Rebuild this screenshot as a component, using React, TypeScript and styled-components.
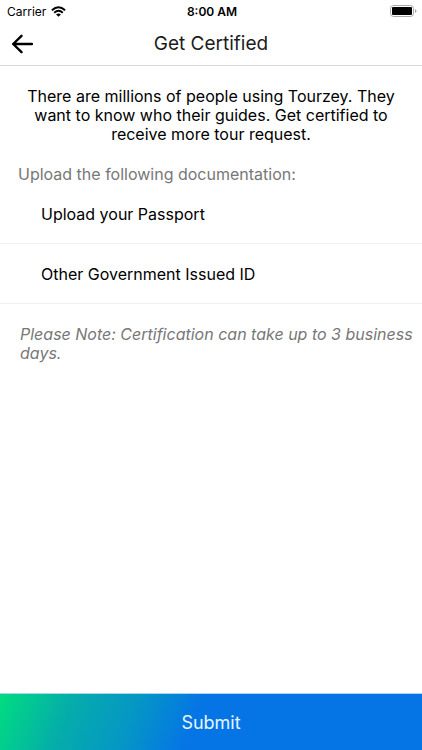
import React from 'react';
import styled, { createGlobalStyle } from 'styled-components';

const GlobalStyle = createGlobalStyle`
  * { box-sizing: border-box; }
  body { margin: 0; background: #fff; color: #000; font-family: Inter, "Liberation Sans", sans-serif; }
`;
const Screen = styled.div`
  display: flex;
  flex-direction: column;
  min-height: 100vh;
`;
const StatusBar = styled.div`
  display: grid;
  grid-template-columns: 1fr auto 1fr;
  align-items: center;
  height: 22px;
  padding: 0 5px 0 7px;
  font-size: 12px;
`;
const Carrier = styled.span`
  display: flex;
  align-items: center;
  gap: 5px;
`;
const Clock = styled.time`
  font-weight: 600;
`;
const Battery = styled.svg`
  justify-self: end;
`;
const Header = styled.header`
  display: grid;
  grid-template-columns: 44px 1fr 44px;
  align-items: center;
  height: 44px;
  border-bottom: 1px solid #dadada;
`;
const BackButton = styled.button`
  display: flex;
  align-items: center;
  height: 42px;
  padding: 0 0 0 11px;
  border: 0;
  background: none;
  color: #000;
`;
const Title = styled.h1`
  margin: 0;
  color: #1c1c1c;
  font-size: 19px;
  font-weight: 400;
  line-height: 42px;
  text-align: center;
`;
const Main = styled.main`
  flex: 1;
  padding-top: 21px;
`;
const Intro = styled.p`
  margin: 0;
  padding: 0 20px;
  font-size: 16px;
  line-height: 19px;
  text-align: center;
`;
const SectionTitle = styled.h2`
  margin: 0;
  padding: 20px 18px 0;
  color: #777;
  font-size: 16px;
  font-weight: 400;
  line-height: 20px;
`;
const Documents = styled.ul`
  margin: 0;
  padding: 0;
  list-style: none;
`;
const Row = styled.li`
  border-bottom: 1px solid #f0f0f0;
`;
const RowButton = styled.button`
  width: 100%;
  height: 59px;
  padding: 0 41px;
  border: 0;
  background: none;
  color: #000;
  font: inherit;
  font-size: 16px;
  text-align: left;
`;
const Note = styled.p`
  margin: 0;
  padding: 21px 8px 20px 20px;
  color: #777;
  font-size: 16px;
  font-style: italic;
  line-height: 19px;
`;
const Submit = styled.button`
  height: 57px;
  border: 0;
  border-top: 1px solid #a9d4f4;
  background: linear-gradient(111deg, #00dc80 0%, #05acab 17%, #0596c6 32%, #0575e6 46%);
  background-clip: padding-box;
  color: #e8f6ff;
  font: inherit;
  font-size: 18px;
`;

export default function App() {
  return (
    <Screen>
      <GlobalStyle />
      <StatusBar>
        <Carrier>
          Carrier
          <svg width="15" height="11" viewBox="0 0 15 11" fill="none" stroke="#000" strokeWidth="1.9" aria-hidden="true">
            <path d="M.9 4.2Q7.5-1.8 14.1 4.2M3.2 6.7Q7.5 3 11.8 6.7" />
            <path d="M5.1 8.4Q7.5 6.4 9.9 8.4L7.5 10.8Z" fill="#000" stroke="none" />
          </svg>
        </Carrier>
        <Clock>8:00 AM</Clock>
        <Battery width="27" height="12" viewBox="0 0 27 12" aria-hidden="true">
          <rect x="0.5" y="0.5" width="23" height="11" rx="3" fill="none" stroke="#a8a8a8" />
          <rect x="2" y="2" width="20" height="8" rx="1" />
          <path d="M25 4Q26.5 4.5 26.5 6T25 8Z" fill="#a8a8a8" />
        </Battery>
      </StatusBar>
      <Header>
        <BackButton aria-label="Back">
          <svg width="22" height="20" viewBox="0 0 22 20" fill="none" stroke="currentColor" strokeWidth="2.4" strokeLinecap="round" strokeLinejoin="round">
            <path d="M10.5 1.8L2.2 10L10.5 18.2M2.2 10H21" />
          </svg>
        </BackButton>
        <Title>Get Certified</Title>
      </Header>
      <Main>
        <Intro>
          There are millions of people using Tourzey. They want to know who their guides. Get certified to receive more tour request.
        </Intro>
        <SectionTitle>Upload the following documentation:</SectionTitle>
        <Documents>
          <Row><RowButton>Upload your Passport</RowButton></Row>
          <Row><RowButton>Other Government Issued ID</RowButton></Row>
        </Documents>
        <Note>Please Note: Certification can take up to 3 business days.</Note>
      </Main>
      <Submit>Submit</Submit>
    </Screen>
  );
}
